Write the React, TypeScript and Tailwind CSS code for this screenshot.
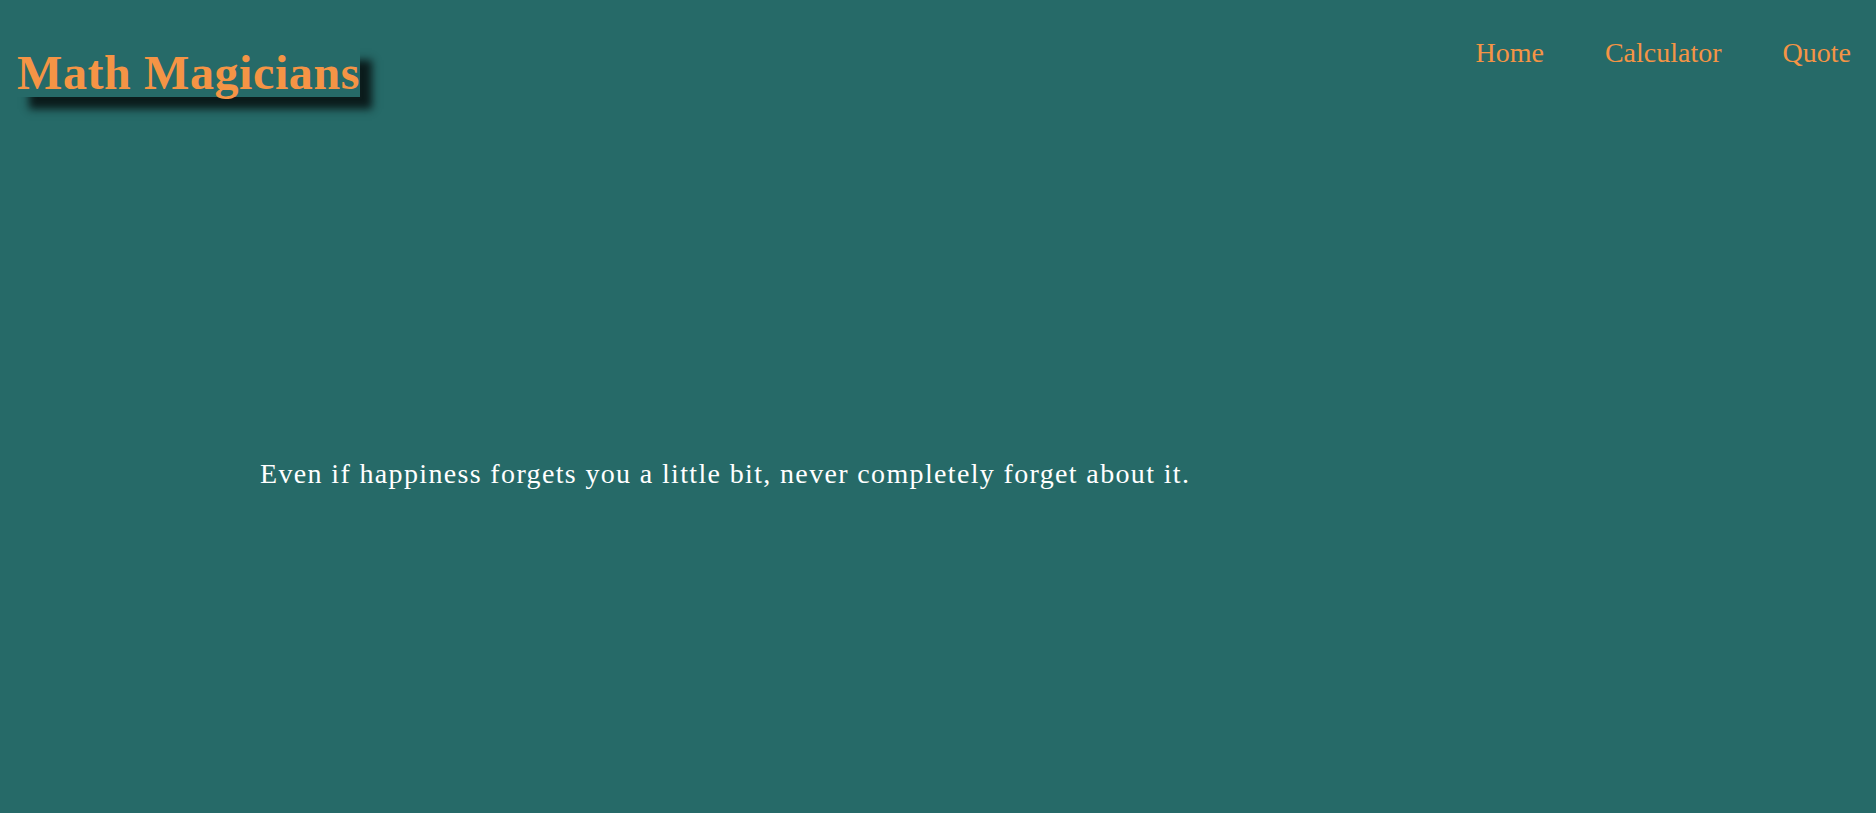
const navLinks = ["Home", "Calculator", "Quote"];

const App = () => {
  return (
    <div
      className="min-h-screen w-full bg-[#266a68]"
      style={{ fontFamily: '"Liberation Serif", "DejaVu Serif", serif' }}
    >
      <header className="flex items-start justify-between">
        <h1 className="ml-[17px] mt-[48px] inline-block bg-[#266a68] text-[48px] font-bold leading-[49px] tracking-[0.6px] text-[#f59445] shadow-[12px_12px_8px_#0b1c1c]">
          Math Magicians
        </h1>
        <nav className="mr-[25px] mt-[37px]">
          <ul className="flex gap-[61px]">
            {navLinks.map((link) => (
              <li key={link}>
                <a href="#" className="text-[28px] leading-[32px] text-[#f59445]">
                  {link}
                </a>
              </li>
            ))}
          </ul>
        </nav>
      </header>

      <main>
        <p className="ml-[260px] mt-[361px] text-[28px] leading-[32px] tracking-[1.35px] text-white">
          Even if happiness forgets you a little bit, never completely forget about it.
        </p>
      </main>
    </div>
  );
};

export default App;
